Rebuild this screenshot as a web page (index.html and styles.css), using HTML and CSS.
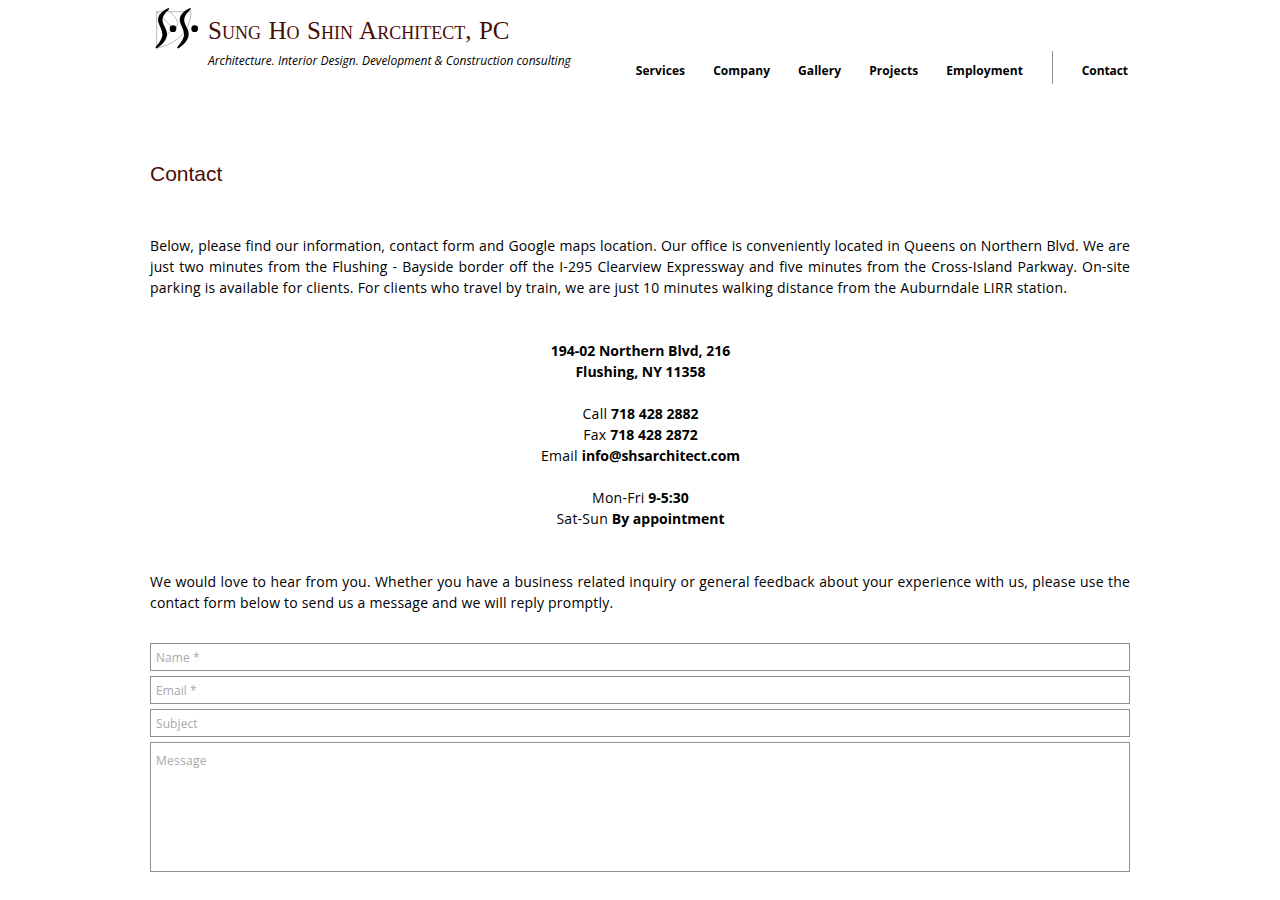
FILE: index.html
```
<!DOCTYPE html>
<html lang="en">
<head>
  <meta charset="UTF-8">
  <meta name="viewport" content="width=device-width, initial-scale=1">
  <title>Contact | Sung Ho Shin Architect, PC</title>
  <link rel="stylesheet" href="styles.css">
</head>
<body>

  <div class="page">
    <header class="header">
      <a class="logo" href="#">
        <svg width="54" height="50" viewBox="0 0 162 150">
          <path class="logo-line" d="M20 132V23H123C123 75 85 120 20 132M20 23L69 73L20 128M49 18C90 40 90 73 69 73"/>
          <path d="M56 12C32 22 21 38 25 54C29 68 36 76 37 89C38 105 25 118 17 129C16 134 19 134 22 132C42 118 52 104 51 88C50 74 40 66 38 52C36 38 46 26 58 15Z"/>
          <path d="M121 12C97 22 86 38 90 54C94 68 101 76 102 89C103 105 90 118 82 129C81 134 84 134 87 132C107 118 117 104 116 88C115 74 105 66 103 52C101 38 111 26 123 15Z"/>
          <circle cx="69" cy="74" r="10"/>
          <circle cx="134" cy="74" r="10"/>
        </svg>
      </a>
      <div class="brand">
        <div class="brand-name">Sung Ho Shin Architect, PC</div>
        <div class="brand-tagline">Architecture. Interior Design. Development &amp; Construction consulting</div>
      </div>
      <nav class="nav">
        <a href="#">Services</a>
        <a href="#">Company</a>
        <a href="#">Gallery</a>
        <a href="#">Projects</a>
        <a href="#">Employment</a>
        <a class="nav-last" href="#">Contact</a>
      </nav>
    </header>

    <main>
      <h1 class="title">Contact</h1>

      <p class="text">Below, please find our information, contact form and Google maps location. Our office is conveniently located in Queens on Northern Blvd. We are just two minutes from the Flushing - Bayside border off the I-295 Clearview Expressway and five minutes from the Cross-Island Parkway. On-site <span class="text-end">parking is available for clients. For clients who travel by train, we are just 10 minutes walking distance from the Auburndale LIRR station.</span></p>

      <div class="info">
        <p><b>194-02 Northern Blvd, 216</b><br><b>Flushing, NY 11358</b></p>
        <p>Call <b>718 428 2882</b><br>Fax <b>718 428 2872</b><br>Email <b class="info-email">info@shsarchitect.com</b></p>
        <p>Mon-Fri <b>9-5:30</b><br>Sat-Sun <b>By appointment</b></p>
      </div>

      <p class="text text-note">We would love to hear from you. Whether you have a business related inquiry or general feedback about your experience with us, please use the contact form below to send us a message and we will reply promptly.</p>

      <form class="form">
        <input type="text" placeholder="Name *">
        <input type="email" placeholder="Email *">
        <input type="text" placeholder="Subject">
        <textarea placeholder="Message"></textarea>
      </form>
    </main>
  </div>

</body>
</html>
```
FILE: styles.css
```
* {
  box-sizing: border-box;
}

body {
  margin: 0;
  background: #fff;
  color: #000;
  font-family: "Open Sans", sans-serif;
  font-size: 14px;
  line-height: 21px;
}

.page {
  width: 980px;
  margin: 0 auto;
}

/* Header */
.header {
  display: flex;
  height: 150px;
}

.logo {
  width: 54px;
  margin-top: 4px;
}

.logo svg {
  display: block;
}

.logo-line {
  fill: none;
  stroke: #999;
  stroke-width: 2;
}

.brand {
  padding: 16px 0 0 4px;
  white-space: nowrap;
}

.brand-name {
  color: #4a0d06;
  font-family: "Liberation Serif", serif;
  font-size: 25px;
  font-variant: small-caps;
  line-height: 30px;
  word-spacing: 1.3px;
}

.brand-tagline {
  margin-top: 6px;
  font-size: 12px;
  font-style: italic;
  line-height: 18px;
}

.nav {
  display: flex;
  margin: 51px 2px 0 auto;
  gap: 28px;
  height: 33px;
}

.nav a {
  color: #000;
  font-size: 12px;
  font-weight: bold;
  letter-spacing: 0.07px;
  line-height: 39px;
  text-decoration: none;
}

.nav .nav-last {
  margin-left: 0.8px;
  border-left: 1px solid #8f8f8f;
  padding-left: 29px;
  letter-spacing: -0.08px;
}

/* Content */
.title {
  height: 34px;
  margin: 0 0 51px;
  padding-top: 7px;
  color: #4a0d06;
  font-family: "Liberation Sans", sans-serif;
  font-size: 21px;
  font-weight: normal;
  line-height: 34px;
}

.text {
  margin: 0;
  letter-spacing: 0.12px;
  text-align: justify;
}

.text-end {
  letter-spacing: 0.245px;
}

.text-note {
  letter-spacing: 0.205px;
}

.info {
  margin: 42px 0;
  padding-left: 1px;
  letter-spacing: 0.25px;
  text-align: center;
}

.info p {
  margin: 0 0 21px;
}

.info b {
  letter-spacing: 0;
}

.info .info-email {
  letter-spacing: -0.08px;
}

/* Form */
.form {
  display: flex;
  flex-direction: column;
  gap: 5px;
  margin-top: 30px;
}

.form input,
.form textarea {
  width: 100%;
  height: 28px;
  margin: 0;
  border: 1px solid #8f8f8f;
  border-radius: 0;
  padding: 0 5px;
  background: #fff;
  font-family: "Open Sans", sans-serif;
  font-size: 12px;
  letter-spacing: 0.08px;
}

.form textarea {
  height: 130px;
  padding-top: 9px;
  letter-spacing: 0.25px;
  resize: none;
}

.form ::placeholder {
  color: #a9a9a9;
}
```
